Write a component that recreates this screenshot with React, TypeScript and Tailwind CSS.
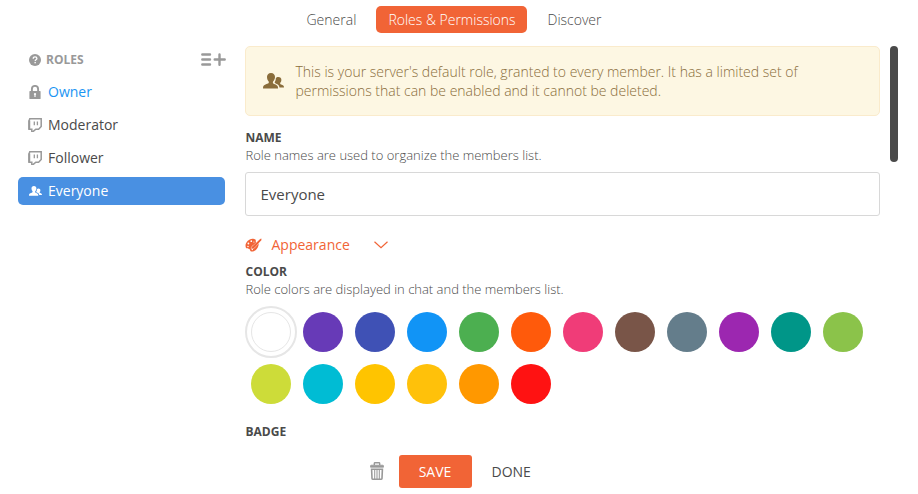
import React from "react";

type IconProps = { className?: string };

const QuestionIcon = () => (
  <svg viewBox="0 0 12 12" className="size-3 shrink-0">
    <circle cx="6" cy="6" r="6" fill="#999" />
    <path d="M4.2 4.7C4.2 3.5 5 2.9 6.05 2.9s1.85.6 1.85 1.6c0 1.3-1.7 1.3-1.7 2.5" fill="none" stroke="#fff" strokeWidth="1.3" />
    <rect x="5.45" y="7.9" width="1.4" height="1.4" fill="#fff" />
  </svg>
);

const AddListIcon = () => (
  <svg viewBox="0 0 25 13" className="-mr-px h-[13px] w-[25px]" stroke="#999" strokeWidth="2.4" strokeLinecap="round">
    <path d="M1.300 1.500H9M1.300 6.500H9M1.300 11.500H9M13.700 6.500h10M18.500 1.400v10.300" />
  </svg>
);

const LockIcon = () => (
  <svg viewBox="0 0 12 14" className="mb-px h-[14px] w-3">
    <path d="M2.900 7V4a3.100 3.100 0 0 1 6.200 0v3" fill="none" stroke="#999" strokeWidth="1.900" />
    <path fill="#999" fillRule="evenodd" d="M1 6h10q.6 0 .6.6v6.800q0 .6-.6.6H1q-.6 0-.6-.6V6.600Q.4 6 1 6zM6 7.900a1.200 1.200 0 0 0-.6 2.200V12h1.200v-1.900A1.200 1.200 0 0 0 6 7.900z" />
  </svg>
);

const TwitchIcon = () => (
  <svg viewBox="0 0 14 14" className="mb-px size-[14px]" fill="none" stroke="#999">
    <path d="M1.800.8h11.400v7.700L10.600 11.200H7.800L5.300 13.400H3.800V11.300H1V3z" strokeWidth="1.500" />
    <path d="M1.300 2.500v8.800" strokeWidth="1.900" />
    <path d="M6.300 3.500v3.700M9.400 3.500v3.700" strokeWidth="1.300" />
  </svg>
);

const PeopleIcon = ({ className }: IconProps) => (
  <svg viewBox="0 0 21 16" className={className} fill="currentColor">
    <path d="M8 0C5.400 0 4 1.700 4 4.100c0 1.700.6 3.300 1.700 4.300.3 1 .1 1.700-.7 2.100-2 .9-4.300 1.300-4.900 3.200L0 15.500h15.100c0-3.200-1.500-3.600-4.300-4.800-1-.4-1.100-1.200-.7-2.300C11.300 7.300 12 5.800 12 4.100 12 1.700 10.600 0 8 0z" />
    <path d="M15.300 3.900c-1.100 0-2 .5-2.500 1.400.1 1.500-.3 2.800-1.200 4 .2 1 .8 1.200 2 1.700 1.800.7 2.600 1.700 2.900 3.600H21c0-2.200-1-2.500-2.900-3.200-1-.4-1.100-.9-.8-1.700.7-.7 1.100-1.600 1.100-2.700 0-1.900-1.100-3.100-3.100-3.100z" />
  </svg>
);

const PaletteIcon = () => (
  <svg viewBox="0 0 17 14" className="h-[14px] w-[17px]">
    <path fill="#f16436" d="M7.500.8C10 .5 11.200 2 10.800 3.500c-.3 1.200.7 1.400 2 1.400 1.200.1 1 2.300.2 4-1.300 2.700-3.800 4.700-6.600 4.700-1.500 0-1-1.700-2-2.500-.9-.7-2.900-.2-3.600-1.700C-.5 5.600 3 1.200 7.500.8z" />
    <g fill="#fff">
      <circle cx="3.400" cy="5.500" r=".9" />
      <circle cx="6.300" cy="3.200" r=".85" />
      <circle cx="3" cy="8.400" r=".75" />
      <circle cx="8.900" cy="4" r=".6" />
      <circle cx="7.300" cy="11.500" r=".7" />
    </g>
    <path d="M6.200 10.600C6.300 8.500 7.500 7.500 8.600 7.100L15.600.8c.7-.5 1.300.1.900.9L10.400 9c-1 1.500-2.300 1.900-4.200 1.600z" fill="#f16436" stroke="#fff" strokeWidth=".45" />
    <path d="M9 8.500l6.900-7" stroke="#f16436" strokeWidth="1.700" />
  </svg>
);

const TrashIcon = () => (
  <svg viewBox="0 0 14 18" className="mb-px h-[18px] w-[14px]" fill="none" stroke="#999">
    <path d="M4.300 3V1.500Q4.300.8 5 .8h4q.7 0 .7.7V3" strokeWidth="1.400" />
    <path d="M.5 5.200V4q0-.8.8-.8h11.400q.8 0 .8.8v1.200z" fill="#999" strokeWidth=".8" />
    <path d="M1.600 7.300h10.800L12 16.300q-.1.900-1 .9H3q-.9 0-1-.9z" strokeWidth="1.600" />
    <path d="M4.700 7v10M7 7v10M9.300 7v10" strokeWidth="1.050" />
  </svg>
);

const roles = [
  { name: "Owner", icon: <LockIcon />, style: "text-[#1b95f3]" },
  { name: "Moderator", icon: <TwitchIcon />, style: "text-[#4a4a4a]" },
  { name: "Follower", icon: <TwitchIcon />, style: "text-[#4a4a4a]" },
  { name: "Everyone", icon: <PeopleIcon className="h-[10px] w-[13px]" />, style: "bg-[#4990e2] text-white" },
];

const colors = [
  "#673ab7", "#3f51b5", "#1194f6", "#4caf50", "#ff5a0b", "#f03c78", "#795548", "#647d8b", "#9c27b0", "#009688", "#8bc34a",
  "#cddc39", "#00bcd4", "#ffc400", "#ffc10a", "#ff9800", "#ff1212",
];

const Heading = ({ children }: { children: React.ReactNode }) => (
  <h2 className="pl-[0.5px] text-[12px] leading-[18px] font-bold text-[#4a4a4a]">{children}</h2>
);

const Description = ({ children }: { children: React.ReactNode }) => (
  <p className="h-[18px] pl-[0.5px] text-[13px] leading-[16px] font-light text-[#4a4a4a]">{children}</p>
);

export default function App() {
  return (
    <div className="flex h-[494px] w-[918px] flex-col overflow-hidden bg-white font-['Open_Sans',sans-serif] text-[14px] text-[#4a4a4a]">
      <nav className="flex h-[46px] shrink-0 items-start pt-[6px] pl-[306.5px] leading-[27px] font-light">
        <a className="w-[69.5px]">General</a>
        <a className="h-[27px] w-[151px] rounded-[5px] bg-[#f16436] pl-px text-center text-white">Roles &amp; Permissions</a>
        <a className="pl-[20.5px]">Discover</a>
      </nav>

      <div className="flex h-[396px] shrink-0">
        <aside className="ml-[18px] w-[207px] shrink-0">
          <div className="flex h-[27px] items-center pl-[11px] text-[12px] font-bold text-[#999]">
            <QuestionIcon />
            <span className="ml-[5px] flex-1">ROLES</span>
            <AddListIcon />
          </div>
          <ul className="mt-[5px] flex flex-col gap-[5px]">
            {roles.map((r) => (
              <li key={r.name} className={`flex h-7 items-center rounded-[5px] pl-[10px] ${r.style}`}>
                <span className="flex w-[14px] shrink-0 justify-center">{r.icon}</span>
                <span className="ml-[6px] leading-[20px]">{r.name}</span>
              </li>
            ))}
          </ul>
        </aside>

        <main className="ml-5 w-[635px] shrink-0">
          <div className="flex h-[70px] items-center rounded-[5px] border border-[#faebcc] bg-[#fdf7e3] pl-[17px] text-[#8a6d3b]">
            <PeopleIcon className="mb-px h-4 w-[21px] shrink-0" />
            <p className="ml-[11.5px] w-[530px] text-[14px] leading-[19px] font-light">
              This is your server's default role, granted to every member. It has a limited set of permissions that can be enabled and it cannot be deleted.
            </p>
          </div>
          <section className="pt-[13px]">
            <Heading>NAME</Heading>
            <Description>Role names are used to organize the members list.</Description>
            <input readOnly value="Everyone" className="mt-[7px] block h-11 w-full rounded-[3px] border border-[#d8d8d8] px-[14.5px] text-[15px] text-[#4a4a4a] outline-none" />
          </section>
          <div className="mt-[17px] flex h-6 items-center text-[#f16436]">
            <PaletteIcon />
            <span className="ml-[9.5px] w-[102.5px] leading-[20px]">Appearance</span>
            <svg viewBox="0 0 14 8" className="h-2 w-[14px]" fill="none" stroke="currentColor" strokeWidth="1.200">
              <path d="M.5.7 7 6.700 13.500.7" />
            </svg>
          </div>
          <section className="pt-[6px]">
            <Heading>COLOR</Heading>
            <Description>Role colors are displayed in chat and the members list.</Description>
            <div className="mt-[7px] flex flex-wrap">
              <div className="flex size-[52px] items-center justify-center rounded-full border-2 border-[#e6e6e6]">
                <div className="size-10 rounded-full border border-[#e6e6e6]" />
              </div>
              {colors.map((c) => (
                <div key={c} className="flex size-[52px] items-center justify-center">
                  <div className="size-10 rounded-full" style={{ backgroundColor: c }} />
                </div>
              ))}
            </div>
          </section>
          <section className="pt-[13px]">
            <Heading>BADGE</Heading>
          </section>
        </main>
        <div className="ml-[10px] h-[116px] w-2 rounded-full bg-[#4a4a4a]" />
      </div>

      <footer className="mt-[13px] flex h-[33px] shrink-0 items-center pl-[370px]">
        <TrashIcon />
        <button className="ml-[15px] h-[33px] w-[73px] rounded-[3px] bg-[#f16436] pr-px text-[14px] text-white">SAVE</button>
        <button className="ml-[19.5px] text-[14px]">DONE</button>
      </footer>
    </div>
  );
}
